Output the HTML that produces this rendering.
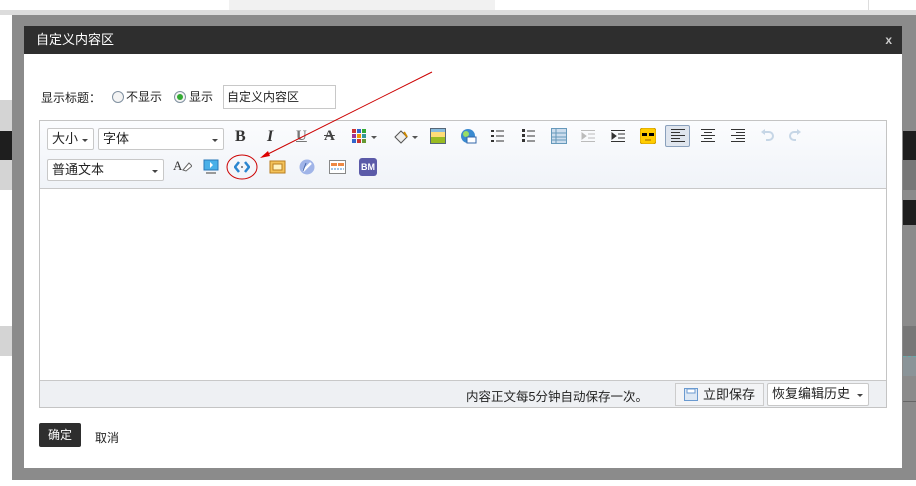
<!DOCTYPE html>
<html><head><meta charset="utf-8"><style>
*{margin:0;padding:0;box-sizing:border-box}
body{width:916px;height:486px;position:relative;overflow:hidden;background:#fff;font-family:"Liberation Sans","Noto Sans CJK SC",sans-serif;font-size:12px;color:#222}
.a{position:absolute}
.sel{position:absolute;border:1px solid #c8c8c8;background:#fff;height:22px;font-size:13px;line-height:20px;padding-left:4px;border-radius:2px}
.sel:after{content:"";position:absolute;right:5px;top:10px;border:3px solid transparent;border-top:3px solid #444}
</style></head><body>
<div class="a" style="left:0;top:10px;width:916px;height:5px;background:#dcdcdc"></div>
<div class="a" style="left:229px;top:0;width:266px;height:10px;background:#f1f1f1"></div>
<div class="a" style="left:868px;top:0;width:1px;height:10px;background:#ddd"></div>
<div class="a" style="left:0;top:100px;width:12px;height:31px;background:#d4d4d4"></div>
<div class="a" style="left:0;top:131px;width:12px;height:29px;background:#1e1e1e"></div>
<div class="a" style="left:0;top:160px;width:12px;height:30px;background:#d4d4d4"></div>
<div class="a" style="left:0;top:326px;width:12px;height:30px;background:#d4d4d4"></div>
<!-- frame -->
<div class="a" style="left:12px;top:15px;width:904px;height:465px;background:#8b8b8b"></div>
<div class="a" style="left:902px;top:15px;width:14px;height:465px;background:#8b8b8b"></div>
<div class="a" style="left:903px;top:131px;width:13px;height:29px;background:#1e1e1e"></div>
<div class="a" style="left:903px;top:200px;width:13px;height:25px;background:#1e1e1e"></div>
<div class="a" style="left:903px;top:160px;width:13px;height:30px;background:#777"></div>
<div class="a" style="left:903px;top:326px;width:13px;height:30px;background:#777"></div>
<div class="a" style="left:903px;top:356px;width:13px;height:20px;background:#8a9498;border-top:1px dashed #6aa"></div>
<div class="a" style="left:903px;top:401px;width:13px;height:1px;background:#666"></div>
<!-- dialog -->
<div class="a" style="left:24px;top:26px;width:878px;height:442px;background:#fff"></div>
<div class="a" style="left:24px;top:26px;width:878px;height:28px;background:#2e2e2e;color:#fff;font-size:13px;line-height:28px;padding-left:12px">自定义内容区<span style="position:absolute;right:10px;font-weight:bold;color:#ccc;font-size:12px">x</span></div>
<div class="a" style="left:41px;top:89px;font-size:12px">显示标题：</div>
<div class="a" style="left:112px;top:91px;width:12px;height:12px;border:1px solid #8090a0;border-radius:50%;background:#f4f4f4"></div>
<div class="a" style="left:126px;top:88px">不显示</div>
<div class="a" style="left:174px;top:91px;width:12px;height:12px;border:1px solid #8090a0;border-radius:50%;background:#f4f4f4"><div style="margin:2px;width:6px;height:6px;border-radius:50%;background:#3a3"></div></div>
<div class="a" style="left:189px;top:88px">显示</div>
<div class="a" style="left:223px;top:85px;width:113px;height:24px;border:1px solid #c8c8c8;font-size:12px;line-height:22px;padding-left:3px">自定义内容区</div>
<!-- editor -->
<div class="a" style="left:39px;top:120px;width:848px;height:288px;border:1px solid #c4c4c4;background:#fff"></div>
<div class="a" style="left:40px;top:121px;width:846px;height:68px;background:linear-gradient(#fbfcfe,#f0f3f8);border-bottom:1px solid #c8c8c8"></div>
<div class="a" style="left:40px;top:380px;width:846px;height:27px;background:#eef0f3;border-top:1px solid #c8c8c8"></div>
<div class="sel" style="left:47px;top:128px;width:47px">大小</div>
<div class="sel" style="left:98px;top:128px;width:126px">字体</div>
<div class="sel" style="left:47px;top:159px;width:117px">普通文本</div>
<div class="a" style="left:235px;top:128px;font:bold 16px 'Liberation Serif',serif;color:#333">B</div>
<div class="a" style="left:267px;top:128px;font:italic bold 16px 'Liberation Serif',serif;color:#333">I</div>
<div class="a" style="left:296px;top:128px;font:bold 15px 'Liberation Serif',serif;color:#777;text-decoration:underline">U</div>
<div class="a" style="left:324px;top:128px;font:bold 15px 'Liberation Serif',serif;color:#444;text-decoration:line-through">A</div>
<svg class="a" style="left:352px;top:129px" width="30" height="16"><g><rect x="0" y="0" width="4" height="4" fill="#c33"/><rect x="5" y="0" width="4" height="4" fill="#36c"/><rect x="10" y="0" width="4" height="4" fill="#3a3"/><rect x="0" y="5" width="4" height="4" fill="#939"/><rect x="5" y="5" width="4" height="4" fill="#e90"/><rect x="10" y="5" width="4" height="4" fill="#399"/><rect x="0" y="10" width="4" height="4" fill="#36c"/><rect x="5" y="10" width="4" height="4" fill="#c33"/><rect x="10" y="10" width="4" height="4" fill="#693"/></g><path d="M19 7l3 3 3-3z" fill="#555"/></svg>
<svg class="a" style="left:392px;top:128px" width="28" height="18"><path d="M3 9l6-6 6 6-6 6z" fill="#eee" stroke="#555"/><path d="M12 4l3 5" stroke="#c80" stroke-width="2"/><path d="M20 8l3 3 3-3z" fill="#555"/></svg>
<svg class="a" style="left:430px;top:128px" width="16" height="16"><rect x="0.5" y="0.5" width="15" height="15" fill="#8bd" stroke="#567"/><rect x="1" y="9" width="14" height="6" fill="#9b2"/><rect x="1" y="4" width="14" height="5" fill="#fd7"/></svg>
<svg class="a" style="left:460px;top:128px" width="17" height="17"><circle cx="8" cy="8" r="7" fill="#3a8ad0"/><circle cx="6" cy="6" r="3" fill="#9d6"/><rect x="7" y="9" width="9" height="6" fill="#fff" stroke="#36a"/></svg>
<svg class="a" style="left:491px;top:129px" width="14" height="14" fill="#333"><rect x="0" y="1" width="3" height="2"/><rect x="5" y="1.5" width="8" height="1"/><rect x="0" y="6" width="3" height="2"/><rect x="5" y="6.5" width="8" height="1"/><rect x="0" y="11" width="3" height="2"/><rect x="5" y="11.5" width="8" height="1"/></svg>
<svg class="a" style="left:522px;top:129px" width="14" height="14" fill="#333"><rect x="0" y="0" width="3" height="3"/><rect x="5" y="1.5" width="8" height="1"/><rect x="0" y="5" width="3" height="3"/><rect x="5" y="6.5" width="8" height="1"/><rect x="0" y="10" width="3" height="3"/><rect x="5" y="11.5" width="8" height="1"/></svg>
<svg class="a" style="left:551px;top:128px" width="16" height="16"><rect x="0.5" y="0.5" width="15" height="15" fill="#cde" stroke="#69b"/><path d="M1 5h14M1 9h14M1 12h14M5 1v14" stroke="#69b"/></svg>
<svg class="a" style="left:581px;top:129px" width="14" height="14" stroke="#bbb"><path d="M0 1.5h14M0 12.5h14M7 5h7M7 9h7"/><path d="M5 7l-4-3v6z" fill="#bbb"/></svg>
<svg class="a" style="left:611px;top:129px" width="14" height="14" stroke="#333"><path d="M0 1.5h14M0 12.5h14M7 5h7M7 9h7"/><path d="M1 4l4 3-4 3z" fill="#333"/></svg>
<svg class="a" style="left:640px;top:128px" width="16" height="16"><rect x="0" y="0" width="16" height="16" rx="3" fill="#fc0" stroke="#c90"/><rect x="2" y="5" width="5" height="3" fill="#000"/><rect x="9" y="5" width="5" height="3" fill="#000"/><path d="M5 12h6" stroke="#960"/></svg>
<div class="a" style="left:665px;top:125px;width:25px;height:22px;border:1px solid #8aa0bc;border-radius:2px;background:#dfe5ee"></div>
<svg class="a" style="left:671px;top:129px" width="14" height="14" stroke="#333"><path d="M0 .5h14M0 3.5h9M0 6.5h14M0 9.5h9M0 12.5h14"/></svg>
<svg class="a" style="left:701px;top:129px" width="14" height="14" stroke="#333"><path d="M0 .5h14M3 3.5h8M0 6.5h14M3 9.5h8M0 12.5h14"/></svg>
<svg class="a" style="left:731px;top:129px" width="14" height="14" stroke="#333"><path d="M0 .5h14M5 3.5h9M0 6.5h14M5 9.5h9M0 12.5h14"/></svg>
<svg class="a" style="left:760px;top:128px" width="14" height="14" fill="none" stroke="#c6d6e6" stroke-width="2"><path d="M4 4h5a4 4 0 010 8H6"/><path d="M1 4l4-3v6z" fill="#c6d6e6" stroke="none"/></svg>
<svg class="a" style="left:788px;top:128px" width="14" height="14" fill="none" stroke="#c6d6e6" stroke-width="2"><path d="M10 4H6a4 4 0 000 8h2"/><path d="M13 4l-4-3v6z" fill="#c6d6e6" stroke="none"/></svg>
<!-- row2 -->
<div class="a" style="left:173px;top:158px;font:13px 'Liberation Serif',serif;color:#333">A<svg width="10" height="12" style="vertical-align:-2px"><path d="M1 10l6-7 3 3-6 5z" fill="#fff" stroke="#666"/></svg></div>
<svg class="a" style="left:203px;top:159px" width="16" height="16"><rect x="1" y="1" width="14" height="10" fill="#4ab0e8" stroke="#2878b8"/><rect x="3" y="13" width="10" height="2" fill="#999"/><path d="M7 3l3 3-3 3z" fill="#fff"/></svg>
<svg class="a" style="left:234px;top:160px" width="16" height="14" stroke="#2a86d0" stroke-width="2.5" fill="none"><path d="M5 2L1 7l4 5M11 2l4 5-4 5"/><path d="M7 7h2" stroke="#666" stroke-width="1.5"/></svg>
<svg class="a" style="left:269px;top:159px" width="17" height="16"><rect x="1" y="2" width="15" height="12" fill="#f3c25a" stroke="#b87d20"/><rect x="4" y="5" width="9" height="6" fill="#fff3c0" stroke="#b87d20"/></svg>
<svg class="a" style="left:299px;top:159px" width="16" height="16"><circle cx="8" cy="8" r="7.5" fill="#a0b4e8"/><path d="M4 12L12 4" stroke="#fff" stroke-width="2.5"/><path d="M4 12l3-8" stroke="#4466aa"/></svg>
<svg class="a" style="left:329px;top:160px" width="17" height="14"><rect x="0.5" y="0.5" width="16" height="13" fill="#fff" stroke="#888"/><rect x="2" y="3" width="6" height="3" fill="#e84"/><rect x="9" y="3" width="6" height="3" fill="#e84"/><path d="M2 9h13" stroke="#48c" stroke-dasharray="2 1"/></svg>
<div class="a" style="left:359px;top:158px;width:18px;height:18px;border-radius:3px;background:#5b5aa8;color:#fff;font:bold 9px 'Liberation Sans';line-height:18px;text-align:center">BM</div>
<svg class="a" style="left:0;top:0" width="916" height="486"><path d="M432 72L268 154" stroke="#c00" stroke-width="1"/><path d="M260 158l8-7 2 5z" fill="#d00"/><ellipse cx="242" cy="167" rx="15" ry="12" fill="none" stroke="#c00"/></svg>
<div class="a" style="left:466px;top:386px;font-size:12.5px;color:#222">内容正文每5分钟自动保存一次。</div>
<div class="a" style="left:675px;top:383px;width:89px;height:23px;border:1px solid #ccc;background:#f3f4f6;font-size:13px;line-height:21px;padding-left:27px">立即保存</div>
<svg class="a" style="left:684px;top:388px" width="14" height="13"><rect x=".5" y=".5" width="13" height="12" fill="#dde8f4" stroke="#6a9ad0"/><rect x="3" y="1" width="8" height="4" fill="#fff" stroke="#6a9ad0"/></svg>
<div class="sel" style="left:767px;top:383px;width:102px;height:23px;font-size:13px">恢复编辑历史</div>
<div class="a" style="left:39px;top:423px;width:42px;height:24px;background:#2e2e2e;color:#fff;border-radius:2px;text-align:center;line-height:24px">确定</div>
<div class="a" style="left:95px;top:429px">取消</div>
</body></html>
